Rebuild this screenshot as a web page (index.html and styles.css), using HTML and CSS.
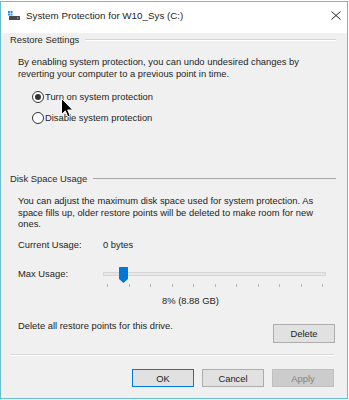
FILE: index.html
```html
<!DOCTYPE html>
<html lang="en">
<head>
  <meta charset="UTF-8" />
  <title>System Protection for W10_Sys (C:)</title>
  <link rel="stylesheet" href="styles.css">
</head>
<body>
  <div class="window">
    <div class="titlebar">
      <svg class="app-icon" width="12" height="10" viewBox="0 0 12 10">
        <rect x="0" y="0" width="2" height="2" fill="#1e90e8" />
        <rect x="2.5" y="0" width="2" height="2" fill="#1e90e8" />
        <rect x="0" y="2.5" width="2" height="2" fill="#1e90e8" />
        <rect x="2.5" y="2.5" width="2" height="2" fill="#1e90e8" />
        <rect x="1" y="5" width="11" height="4" rx="0.5" fill="#4a4a4a" />
        <rect x="9" y="6.5" width="1.5" height="1" fill="#9fd36b" />
      </svg>
      <span class="title">System Protection for W10_Sys (C:)</span>
      <svg class="close" width="10" height="9" viewBox="0 0 10 9">
        <path d="M0.5 0.5 L9.5 8.5 M9.5 0.5 L0.5 8.5" stroke="#222" stroke-width="1" />
      </svg>
    </div>

    <div class="content">
      <div class="group-head">
        <span>Restore Settings</span>
        <div class="rule light"></div>
      </div>
      <p class="desc first">By enabling system protection, you can undo undesired changes by<br>reverting your computer to a previous point in time.</p>

      <div class="radios">
        <div class="radio"><span class="dot checked"></span>Turn on system protection</div>
        <div class="radio"><span class="dot"></span>Disable system protection</div>
      </div>

      <div class="group-head disk">
        <span>Disk Space Usage</span>
        <div class="rule dark"></div>
      </div>
      <p class="desc second">You can adjust the maximum disk space used for system protection. As<br>space fills up, older restore points will be deleted to make room for new<br>ones.</p>

      <div class="usage-row current">
        <span class="usage-label">Current Usage:</span>
        <span>0 bytes</span>
      </div>

      <div class="usage-row max">
        <span class="usage-label">Max Usage:</span>
        <div class="slider">
          <div class="track"></div>
          <svg class="thumb" width="9" height="16" viewBox="0 0 9 16">
            <path d="M0 0.5 Q0 0 0.5 0 L8.5 0 Q9 0 9 0.5 L9 12 L4.5 16 L0 12 Z" fill="#0078d7" />
          </svg>
          <div class="ticks">
            <i></i><i></i><i></i><i></i><i></i><i></i><i></i><i></i><i></i><i></i><i></i>
          </div>
        </div>
      </div>

      <div class="percent">8% (8.88 GB)</div>

      <div class="delete-row">
        <span>Delete all restore points for this drive.</span>
        <button class="btn">Delete</button>
      </div>

      <div class="separator"></div>

      <div class="actions">
        <button class="btn default">OK</button>
        <button class="btn">Cancel</button>
        <button class="btn disabled">Apply</button>
      </div>
    </div>

    <svg class="cursor" width="13" height="21" viewBox="0 0 13 21">
      <path d="M0.5 0.5 L0.5 16.5 L4.3 12.9 L6.8 18.8 L9.2 17.8 L6.7 12 L11.8 12 Z" fill="#000" stroke="#fff" stroke-width="1" stroke-linejoin="miter" />
    </svg>
  </div>
</body>
</html>
```

FILE: styles.css
```css
body {
  margin: 0;
  padding: 0;
  background: #ffffff;
  font-family: "Liberation Sans", Arial, sans-serif;
  color: #1e1e1e;
}

.window {
  position: relative;
  width: 348px;
  height: 398px;
  margin-top: 1px;
  box-sizing: border-box;
  border: 1px solid #69bfcd;
  background: #f0f0f0;
}

.titlebar {
  display: flex;
  align-items: center;
  height: 31px;
  padding-bottom: 5px;
  box-sizing: border-box;
  background: #ffffff;
}

.app-icon {
  margin-left: 7px;
  margin-top: 1px;
}

.title {
  margin-left: 6px;
  font-size: 9.8px;
  flex: 1;
}

.close {
  margin-right: 6px;
  margin-top: 1px;
}

.content {
  font-size: 9.4px;
  line-height: 12px;
}

.group-head {
  display: flex;
  align-items: center;
  height: 12px;
  margin-top: 1px;
  padding-left: 9px;
  color: #2a2a2a;
}

.group-head.disk {
  margin-top: 47.5px;
}

.rule {
  flex: 1;
  margin-left: 6px;
  margin-right: 11px;
}

.rule.light {
  border-top: 1px solid #d5d5d5;
  border-bottom: 1px solid #ffffff;
}

.rule.dark {
  border-top: 1px solid #a8a8a8;
}

.desc {
  margin: 10px 0 0 17px;
  line-height: 11.5px;
  white-space: nowrap;
}

.desc.second {
  margin-top: 10.75px;
}

.radios {
  display: flex;
  flex-direction: column;
  gap: 7.5px;
  margin: 10.5px 0 0 31px;
}

.radio {
  display: flex;
  align-items: center;
  height: 14px;
}

.dot {
  position: relative;
  width: 12px;
  height: 12px;
  box-sizing: border-box;
  border: 1px solid #333;
  border-radius: 50%;
  background: #fff;
  margin-right: 1px;
}

.dot.checked::after {
  content: "";
  position: absolute;
  left: 2px;
  top: 2px;
  width: 6px;
  height: 6px;
  border-radius: 50%;
  background: #333;
}

.usage-row {
  display: flex;
  padding-left: 17px;
}

.usage-row.current {
  margin-top: 9.25px;
}

.usage-row.max {
  margin-top: 15.5px;
}

.usage-label {
  width: 85px;
}

.usage-row.max .usage-label {
  padding-top: 1px;
}

.slider {
  position: relative;
  width: 223px;
  height: 22px;
}

.track {
  margin-top: 5.5px;
  height: 4px;
  box-sizing: border-box;
  border: 1px solid #d6d6d6;
  background: #e7e7e7;
}

.thumb {
  position: absolute;
  left: 16px;
  top: 0.5px;
}

.ticks {
  display: flex;
  justify-content: space-between;
  margin-top: 8px;
  padding: 0 3px 0 4px;
  height: 4px;
}

.ticks i {
  width: 1px;
  height: 3px;
  background: #b4b4b4;
}

.percent {
  margin-top: 6px;
  padding-left: 161px;
}

.delete-row {
  display: flex;
  justify-content: space-between;
  align-items: flex-start;
  margin-top: 13.5px;
  padding-left: 17px;
  padding-right: 12px;
}

.btn {
  width: 62px;
  height: 19px;
  padding: 0;
  margin: 0;
  font-family: "Liberation Sans", Arial, sans-serif;
  font-size: 9.4px;
  color: #1e1e1e;
  background: #e1e1e1;
  border: 1px solid #adadad;
}

.delete-row .btn {
  margin-top: 4px;
}

.separator {
  margin: 11px 13px 0 9px;
  border-top: 1px solid #d7d7d7;
  border-bottom: 1px solid #ffffff;
}

.actions {
  display: flex;
  justify-content: flex-end;
  gap: 8px;
  margin-top: 13px;
  padding-right: 13px;
}

.actions .btn {
  height: 18px;
}

.btn.default {
  border-color: #0078d7;
}

.btn.disabled {
  background: #cccccc;
  border-color: #bfbfbf;
  color: #838383;
}

.cursor {
  position: absolute;
  left: 59.5px;
  top: 95.5px;
}
```
